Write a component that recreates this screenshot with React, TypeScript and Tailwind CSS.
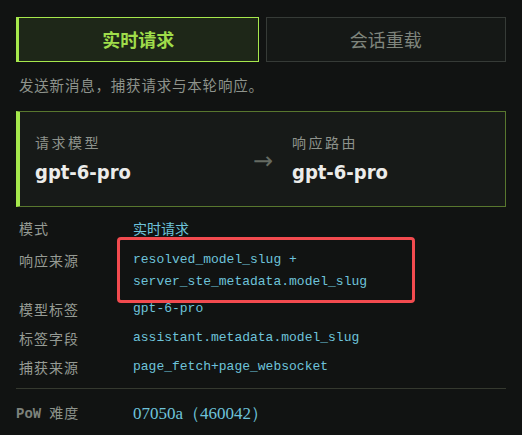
import React from 'react';

const cjk = "font-['Noto_Sans_CJK_SC','Noto_Sans',sans-serif]";
const mono = "font-['Liberation_Mono','Noto_Sans_CJK_SC',monospace]";

function Row({ label, children, boxed }: { label: string; children: React.ReactNode; boxed?: boolean }) {
  return (
    <div className="flex items-start">
      <div className={`w-[117px] shrink-0 pl-[3px] text-[14px] leading-[22px] tracking-[1px] text-[#969b94] ${cjk}`}>{label}</div>
      <div className="relative">
        {boxed && (
          <div className="pointer-events-none absolute -left-[16px] -right-[48px] -top-[12px] -bottom-[10px] rounded-[4px] border-[3px] border-[#f24b4f]" />
        )}
        <div className={`text-[13px] leading-[22px] text-[#6ec3da] ${mono}`}>{children}</div>
      </div>
    </div>
  );
}

export default function App() {
  return (
    <div className={`min-h-screen w-[522px] bg-[#111312] px-4 pt-[17px] ${cjk}`}>
      {/* Tabs */}
      <div className="flex gap-[7px]">
        <button className="flex h-[45px] flex-1 items-center justify-center border border-l-[3px] border-[#a6e84c] bg-[#1e2718] text-[18px] font-bold text-[#9fdc4a]">
          实时请求
        </button>
        <button className="flex h-[45px] flex-1 items-center justify-center border border-[#363b37] bg-[#151816] text-[18px] text-[#7f857d]">
          会话重载
        </button>
      </div>

      <p className="mt-[12px] pl-[3px] text-[14.5px] tracking-[0.8px] text-[#8e938c]">发送新消息，捕获请求与本轮响应。</p>

      {/* Route panel */}
      <div className="mt-[15px] flex h-[96px] items-center border border-l-[4px] border-[#58772e] border-l-[#a6e84c] bg-[#171a18] pl-[15px]">
        <div className="w-[218px]">
          <div className="text-[14px] tracking-[2.5px] text-[#8e938c]">请求模型</div>
          <div className="mt-[6px] font-['DejaVu_Sans_Condensed','DejaVu_Sans',sans-serif] text-[20px] font-bold leading-[26px] text-[#ececea]">gpt-6-pro</div>
        </div>
        <div className="w-[39px] pt-[4px] font-['DejaVu_Sans',sans-serif] text-[24px] text-[#656b62]">→</div>
        <div>
          <div className="text-[14px] tracking-[2.5px] text-[#8e938c]">响应路由</div>
          <div className="mt-[6px] font-['DejaVu_Sans_Condensed','DejaVu_Sans',sans-serif] text-[20px] font-bold leading-[26px] text-[#ececea]">gpt-6-pro</div>
        </div>
      </div>

      {/* Details */}
      <div className="mt-[10px] flex flex-col gap-[7px]">
        <Row label="模式">
          <span className={cjk + ' text-[14px]'}>实时请求</span>
        </Row>
        <Row label="响应来源" boxed>
          resolved_model_slug +<br />server_ste_metadata.model_slug
        </Row>
        <div className="-mt-[2px]">
          <Row label="模型标签">gpt-6-pro</Row>
        </div>
        <Row label="标签字段">assistant.metadata.model_slug</Row>
        <Row label="捕获来源">page_fetch+page_websocket</Row>
      </div>

      <div className="mt-[10px] h-px bg-[#35392f]" />

      <div className="mt-[12px] flex items-center">
        <div className="w-[117px] shrink-0 text-[14px] text-[#8e938c]">
          <span className={`${mono} font-bold text-[14px] text-[#7d827b]`}>PoW</span>
          <span className="ml-[8px] tracking-[1px]">难度</span>
        </div>
        <div className="font-['Liberation_Serif',serif] text-[17px] text-[#6ec3da]">07050a（460042）</div>
      </div>
    </div>
  );
}
